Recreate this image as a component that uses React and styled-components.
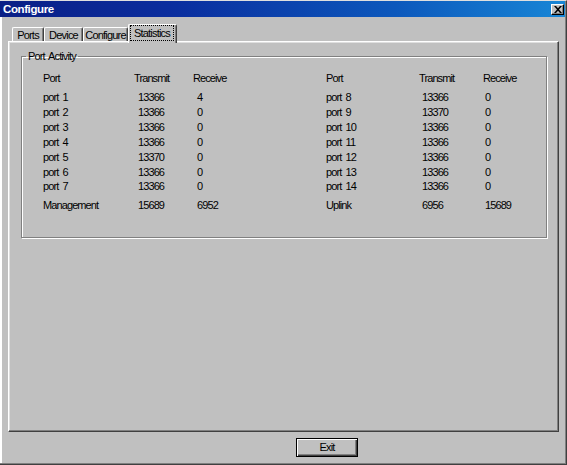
import React from "react"
import styled, { createGlobalStyle } from "styled-components"

const GlobalStyle = createGlobalStyle`
  html, body {
    margin: 0;
    padding: 0;
    background: #c0c0c0;
  }
`

const Window = styled.div`
  width: 567px;
  height: 465px;
  box-sizing: border-box;
  display: flex;
  flex-direction: column;
  background: #c0c0c0;
  border-top: 1px solid #dfdfdf;
  border-right: 1px solid #404040;
  border-bottom: 1px solid #404040;
  padding: 0 1px 1px 0;
  box-shadow: inset -1px -1px 0 #808080, inset 2px 0 0 #ffffff;
  font-family: "Liberation Sans", Arial, sans-serif;
  color: #000;
`

const TitleBar = styled.div`
  height: 16px;
  display: flex;
  align-items: center;
  justify-content: space-between;
  padding: 0 1px 0 3px;
  background: linear-gradient(90deg, #0a1f86 0%, #0a2d9e 30%, #0c58bc 70%, #1886d6 100%);

  h1 {
    margin: 0;
    font-size: 11.5px;
    font-weight: bold;
    letter-spacing: -0.4px;
    color: #fff;
    line-height: 16px;
  }
`

const CloseButton = styled.div`
  width: 13px;
  height: 11px;
  box-sizing: border-box;
  background: #c0c0c0;
  border-top: 1px solid #fff;
  border-left: 1px solid #fff;
  border-right: 1px solid #000;
  border-bottom: 1px solid #000;
  box-shadow: inset -1px -1px 0 #808080;
  display: flex;
  align-items: center;
  justify-content: center;

  svg {
    display: block;
  }
`

const Body = styled.div`
  flex: 1;
  display: flex;
  flex-direction: column;
  padding: 7px 6px 0 8px;
`

const TabStrip = styled.div`
  display: flex;
  align-items: flex-end;
  height: 17px;
  padding-left: 4px;
  position: relative;
  z-index: 1;
`

const Tab = styled.div`
  width: ${(p) => p.$w}px;
  height: ${(p) => (p.$active ? 19 : 14)}px;
  margin-bottom: ${(p) => (p.$active ? -2 : 0)}px;
  box-sizing: border-box;
  display: flex;
  align-items: center;
  justify-content: center;
  font-size: 11px;
  letter-spacing: -0.8px;
  background: #c0c0c0;
  border-top: 1px solid #fff;
  border-left: 1px solid #fff;
  border-right: 1px solid #404040;
  box-shadow: inset -1px 0 0 #808080;
  border-radius: 2px 2px 0 0;
  padding-bottom: ${(p) => (p.$active ? 2 : 0)}px;
`

const FocusLabel = styled.span`
  flex: 1;
  align-self: stretch;
  margin: 0 2px 0 1px;
  display: flex;
  align-items: center;
  justify-content: center;
  outline: 1px dotted #000;
  outline-offset: -1px;
`

const Panel = styled.div`
  height: 391px;
  box-sizing: border-box;
  border-top: 1px solid #fff;
  border-left: 1px solid #fff;
  border-right: 1px solid #404040;
  border-bottom: 1px solid #404040;
  box-shadow: inset -1px -1px 0 #808080, inset 1px 1px 0 #dfdfdf;
  padding: 8px 11px 0 12px;
`

const GroupBox = styled.fieldset`
  margin: 0;
  padding: 7px 0 24px 21px;
  border: 1px solid #808080;
  box-shadow: 1px 1px 0 #fff, inset 1px 1px 0 #fff;
  min-inline-size: auto;

  legend {
    margin-left: -17px;
    padding: 0 2px;
    font-size: 11px;
    line-height: 13px;
    letter-spacing: -0.9px;
    word-spacing: 2px;
  }
`

const Row = styled.div`
  display: grid;
  grid-template-columns: 91px 59px 133px 93px 64px 1fr;
  height: ${(p) => p.$h || 14.83}px;
  margin-top: ${(p) => p.$top || 0}px;
  align-items: center;
  font-size: 11px;
  letter-spacing: -0.9px;
  word-spacing: 2px;
`

const Cell = styled.span`
  padding-left: ${(p) => p.$indent || 0}px;
  white-space: nowrap;
`

const Footer = styled.div`
  height: 31px;
  box-sizing: border-box;
  padding: 5px 0 0 288px;
`

const Button = styled.button`
  width: 62px;
  height: 19px;
  box-sizing: border-box;
  padding: 0;
  margin: 0;
  background: #c0c0c0;
  border: 1px solid #000;
  box-shadow: inset 1px 1px 0 #fff, inset -1px -1px 0 #404040, inset -2px -2px 0 #808080;
  font-family: "Liberation Sans", Arial, sans-serif;
  font-size: 11px;
  letter-spacing: -0.8px;
  color: #000;
`

const tabs = [
  { label: "Ports", w: 32 },
  { label: "Device", w: 39 },
  { label: "Configure", w: 45 },
  { label: "Statistics", w: 49, active: true },
]

const rows = [
  ["port 1", "13366", "4", "port 8", "13366", "0"],
  ["port 2", "13366", "0", "port 9", "13370", "0"],
  ["port 3", "13366", "0", "port 10", "13366", "0"],
  ["port 4", "13366", "0", "port 11", "13366", "0"],
  ["port 5", "13370", "0", "port 12", "13366", "0"],
  ["port 6", "13366", "0", "port 13", "13366", "0"],
  ["port 7", "13366", "0", "port 14", "13366", "0"],
]

const StatRow = ({ cells, top, h }) => (
  <Row $top={top} $h={h}>
    <Cell>{cells[0]}</Cell>
    <Cell $indent={4}>{cells[1]}</Cell>
    <Cell $indent={4}>{cells[2]}</Cell>
    <Cell>{cells[3]}</Cell>
    <Cell $indent={3}>{cells[4]}</Cell>
    <Cell $indent={2}>{cells[5]}</Cell>
  </Row>
)

const App = () => {
  return (
    <>
      <GlobalStyle />
      <Window>
        <TitleBar>
          <h1>Configure</h1>
          <CloseButton>
            <svg width="8" height="7" viewBox="0 0 8 7">
              <path d="M0 0h2l2 2.2L6 0h2L5 3.5 8 7H6L4 4.8 2 7H0l3-3.5z" fill="#000" />
            </svg>
          </CloseButton>
        </TitleBar>
        <Body>
          <TabStrip>
            {tabs.map((t) => (
              <Tab key={t.label} $w={t.w} $active={t.active}>
                {t.active ? <FocusLabel>{t.label}</FocusLabel> : t.label}
              </Tab>
            ))}
          </TabStrip>
          <Panel>
            <GroupBox>
              <legend>Port Activity</legend>
              <Row $h={15}>
                <Cell>Port</Cell>
                <Cell>Transmit</Cell>
                <Cell>Receive</Cell>
                <Cell>Port</Cell>
                <Cell>Transmit</Cell>
                <Cell>Receive</Cell>
              </Row>
              {rows.map((r, i) => (
                <StatRow key={r[0]} cells={r} top={i === 0 ? 5 : 0} />
              ))}
              <StatRow
                cells={["Management", "15689", "6952", "Uplink", "6956", "15689"]}
                top={4}
              />
            </GroupBox>
          </Panel>
          <Footer>
            <Button>Exit</Button>
          </Footer>
        </Body>
      </Window>
    </>
  )
}

export default App
